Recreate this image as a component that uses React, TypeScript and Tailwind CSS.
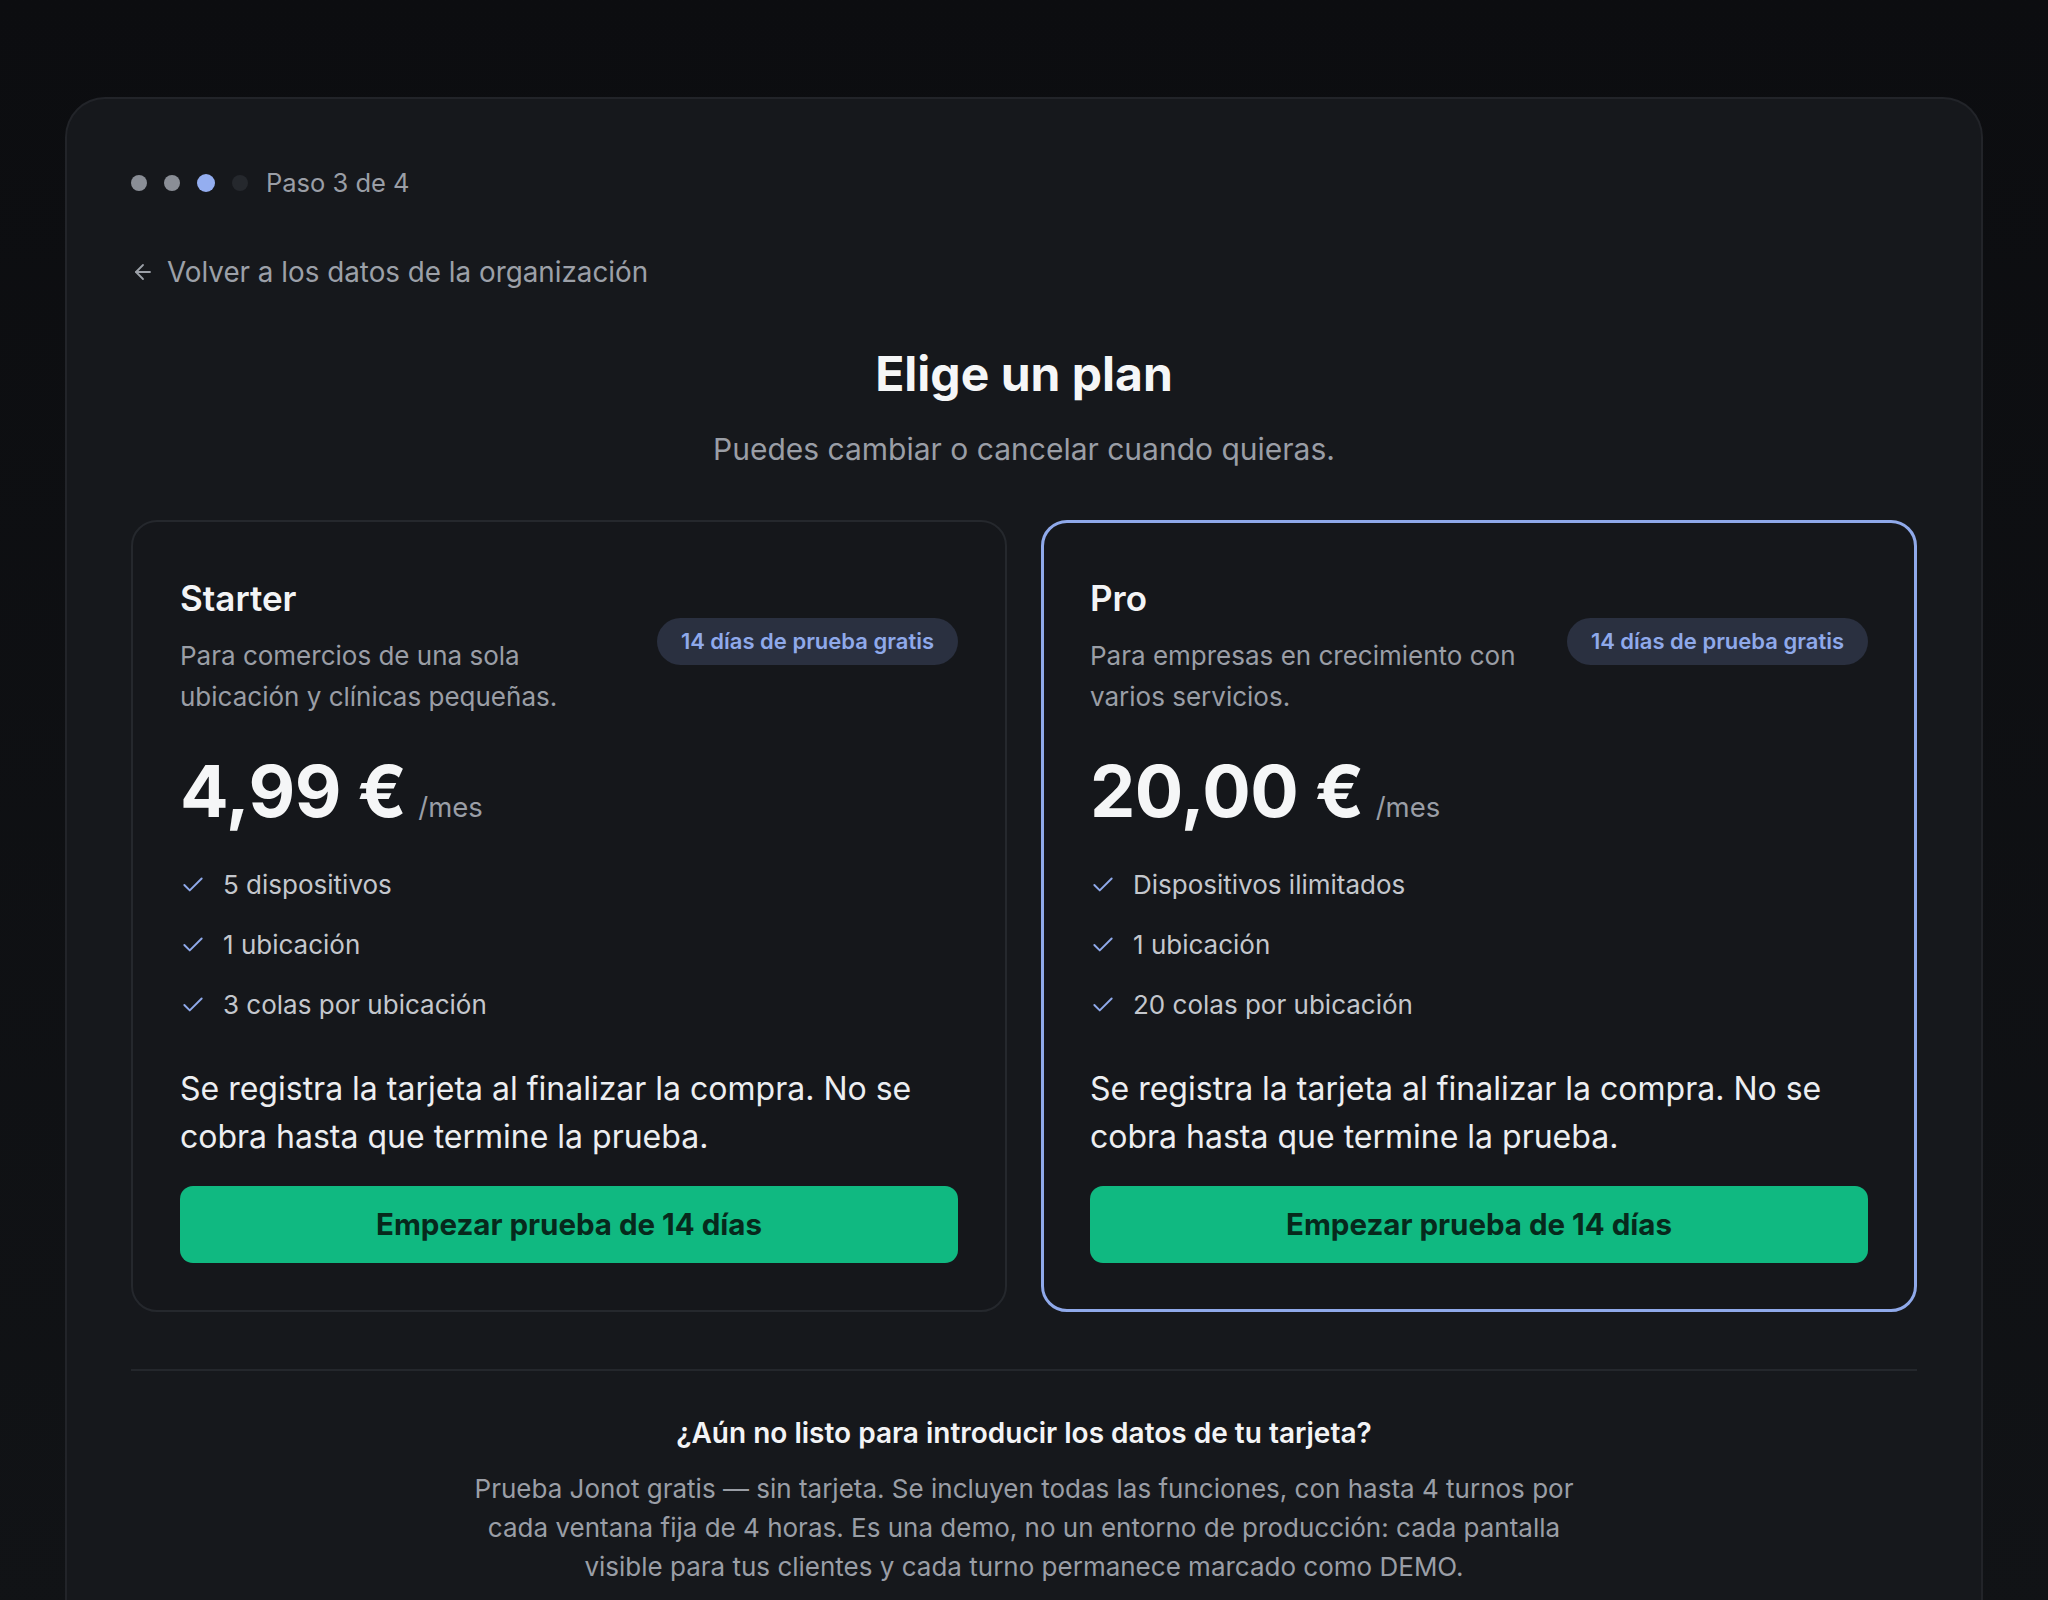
import { ArrowLeft, Check } from "lucide-react";

type Plan = {
  name: string;
  description: string;
  price: string;
  features: string[];
  highlighted?: boolean;
};

const plans: Plan[] = [
  {
    name: "Starter",
    description: "Para comercios de una sola ubicación y clínicas pequeñas.",
    price: "4,99 €",
    features: ["5 dispositivos", "1 ubicación", "3 colas por ubicación"],
  },
  {
    name: "Pro",
    description: "Para empresas en crecimiento con varios servicios.",
    price: "20,00 €",
    features: ["Dispositivos ilimitados", "1 ubicación", "20 colas por ubicación"],
    highlighted: true,
  },
];

function PlanCard({ plan }: { plan: Plan }) {
  return (
    <div
      className={
        plan.highlighted
          ? "flex flex-col rounded-[26px] border-[3px] border-[#8fa9ea] bg-[#15171b] px-[46px] pt-[53px] pb-[46px]"
          : "flex flex-col rounded-[26px] border-2 border-[#25282d] bg-[#15171b] px-[47px] pt-[54px] pb-[47px]"
      }
    >
      <div className="flex items-center justify-between gap-[28px]">
        <div className="flex-1 min-w-0">
          <h2 className="text-[35px] leading-[44px] font-semibold text-[#f3f4f6]">{plan.name}</h2>
          <p className="mt-[15px] text-[26px] leading-[41px] text-[#9a9ea6]">{plan.description}</p>
        </div>
        <span className="mb-[10px] flex h-[47px] flex-shrink-0 items-center rounded-full bg-[#2a3040] px-[24px] text-[22px] font-semibold text-[#8fa9ea]">
          14 días de prueba gratis
        </span>
      </div>

      <div className="mt-[34px] flex items-baseline gap-[12px]">
        <span className="text-[72px] leading-[80px] font-bold tracking-[-0.5px] text-[#f5f6f7]">{plan.price}</span>
        <span className="text-[27.5px] text-[#9a9ea6]">/mes</span>
      </div>

      <ul className="mt-[34px] flex flex-col gap-[20px]">
        {plan.features.map((f, i) => (
          <li key={i} className="flex items-center gap-[17px] text-[26px] leading-[40px] text-[#c4c7cd]">
            <Check className="size-[26px] text-[#8fa9ea]" strokeWidth={1.8} />
            {f}
          </li>
        ))}
      </ul>

      <p className="mt-[40px] text-[32px] leading-[48px] text-[#eceef1]">
        Se registra la tarjeta al finalizar la compra. No se cobra hasta que termine la prueba.
      </p>

      <button className="mt-[25px] h-[77px] w-full rounded-[13px] bg-[#10b981] text-[29.5px] font-bold text-[#07291c]">
        Empezar prueba de 14 días
      </button>
    </div>
  );
}

export default function App() {
  return (
    <div className="min-h-screen bg-gradient-to-b from-[#0c0d10] to-[#111316] px-[65px] pt-[97px] font-['Inter',sans-serif]">
      <div className="rounded-t-[40px] border-2 border-b-0 border-[#222429] bg-[#16181c] px-[64px] pt-[65px] pb-[40px]">
        <div className="flex h-[38px] items-center">
          <div className="flex items-center gap-[17px]">
            <span className="size-[16px] rounded-full bg-[#8a8e96]" />
            <span className="size-[16px] rounded-full bg-[#8a8e96]" />
            <span className="size-[18px] rounded-full bg-[#94aef0]" />
            <span className="size-[16px] rounded-full bg-[#25282d]" />
          </div>
          <span className="ml-[18px] text-[25.5px] text-[#9a9ea6]">Paso 3 de 4</span>
        </div>

        <a className="mt-[50px] inline-flex items-center gap-[12px] text-[27.8px] leading-[40px] text-[#9ca0a8]">
          <ArrowLeft className="size-[24px]" strokeWidth={1.8} />
          Volver a los datos de la organización
        </a>

        <div className="mt-[54px] text-center">
          <h1 className="text-[48px] leading-[56px] font-bold text-[#f5f6f7]">Elige un plan</h1>
          <p className="mt-[27px] text-[30px] leading-[40px] text-[#9a9ea6]">
            Puedes cambiar o cancelar cuando quieras.
          </p>
        </div>

        <div className="mt-[51px] grid grid-cols-2 gap-[34px]">
          {plans.map((p) => (
            <PlanCard key={p.name} plan={p} />
          ))}
        </div>

        <div className="mt-[57px] border-t-2 border-[#24272c] pt-[42px] text-center">
          <h3 className="text-[28px] leading-[40px] font-semibold text-[#f3f4f6]">
            ¿Aún no listo para introducir los datos de tu tarjeta?
          </h3>
          <p className="mx-auto mt-[16px] max-w-[1130px] text-[26px] leading-[39px] text-[#9a9ea6]">
            Prueba Jonot gratis — sin tarjeta. Se incluyen todas las funciones, con hasta 4 turnos por cada ventana fija
            de 4 horas. Es una demo, no un entorno de producción: cada pantalla visible para tus clientes y cada turno
            permanece marcado como DEMO.
          </p>
        </div>
      </div>
    </div>
  );
}
